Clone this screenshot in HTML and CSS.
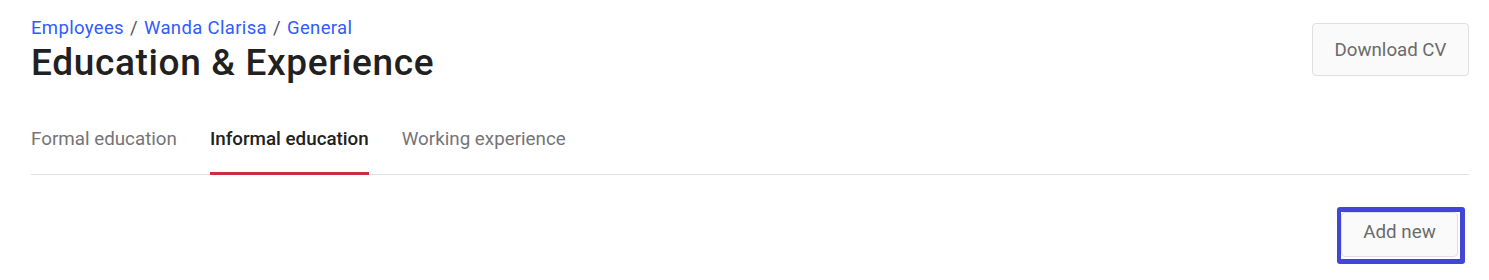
FILE: index.html
```html
<!DOCTYPE html>
<html>
<head>
<meta charset="utf-8">
<link rel="stylesheet" href="styles.css">
</head>
<body>
<div class="page">
  <div class="header">
    <div class="heading">
      <nav class="crumbs">
        <a href="#">Employees</a><span class="sep">/</span><a href="#">Wanda Clarisa</a><span class="sep">/</span><a href="#">General</a>
      </nav>
      <h1 class="title">Education &amp; Experience</h1>
    </div>
    <button class="btn btn-download">Download CV</button>
  </div>
  <div class="tabs">
    <div class="tab">Formal education</div>
    <div class="tab active">Informal education</div>
    <div class="tab">Working experience</div>
  </div>
  <div class="actions">
    <div class="focus-ring"><button class="btn btn-add">Add new</button></div>
  </div>
</div>
</body>
</html>
```
FILE: styles.css
```css
html, body {
  margin: 0;
  padding: 0;
  background: #fff;
}
body {
  font-family: Roboto, "Noto Sans", sans-serif;
  color: #212121;
}
.page {
  padding: 15px 20px 0 31px;
}
.header {
  display: flex;
  justify-content: space-between;
  align-items: flex-start;
}
.crumbs {
  font-size: 18.5px;
  line-height: 26px;
  letter-spacing: 0.35px;
  color: #2f5bff;
}
.crumbs a {
  color: #2f5bff;
  text-decoration: none;
}
.crumbs .sep {
  margin: 0 6px;
  color: #555;
}
.title {
  margin: 0;
  font-size: 37px;
  font-weight: 500;
  line-height: 44px;
  letter-spacing: 0.65px;
  color: #212121;
}
.btn {
  font-family: Roboto, "Noto Sans", sans-serif;
  font-size: 18.7px;
  color: #6b6b6b;
  background: #fafafa;
  border: 1px solid #e0e0e0;
  border-radius: 4px;
  cursor: pointer;
}
.btn-download {
  margin-top: 8px;
  width: 157px;
  height: 53px;
}
.tabs {
  display: flex;
  gap: 33px;
  margin-top: 41px;
  border-bottom: 1px solid #e0e0e0;
}
.tab {
  font-size: 18.8px;
  line-height: 26px;
  padding: 0 0 20px;
  color: #757575;
  border-bottom: 3px solid transparent;
  margin-bottom: -1px;
}
.tab.active {
  color: #212121;
  font-weight: 500;
  border-bottom-color: #c9303b;
}
.actions {
  display: flex;
  justify-content: flex-end;
  margin-top: 32px;
  padding-right: 4px;
}
.focus-ring {
  border: 4px solid #4146d6;
  border-top-width: 5px;
  border-right-width: 5px;
  border-bottom-width: 5px;
  border-radius: 3px;
  display: flex;
  align-items: flex-start;
  width: 119px;
  height: 47px;
}
.btn-add {
  width: 117px;
  height: 45px;
  padding: 0 0 5px;
  font-size: 18.8px;
}
```
